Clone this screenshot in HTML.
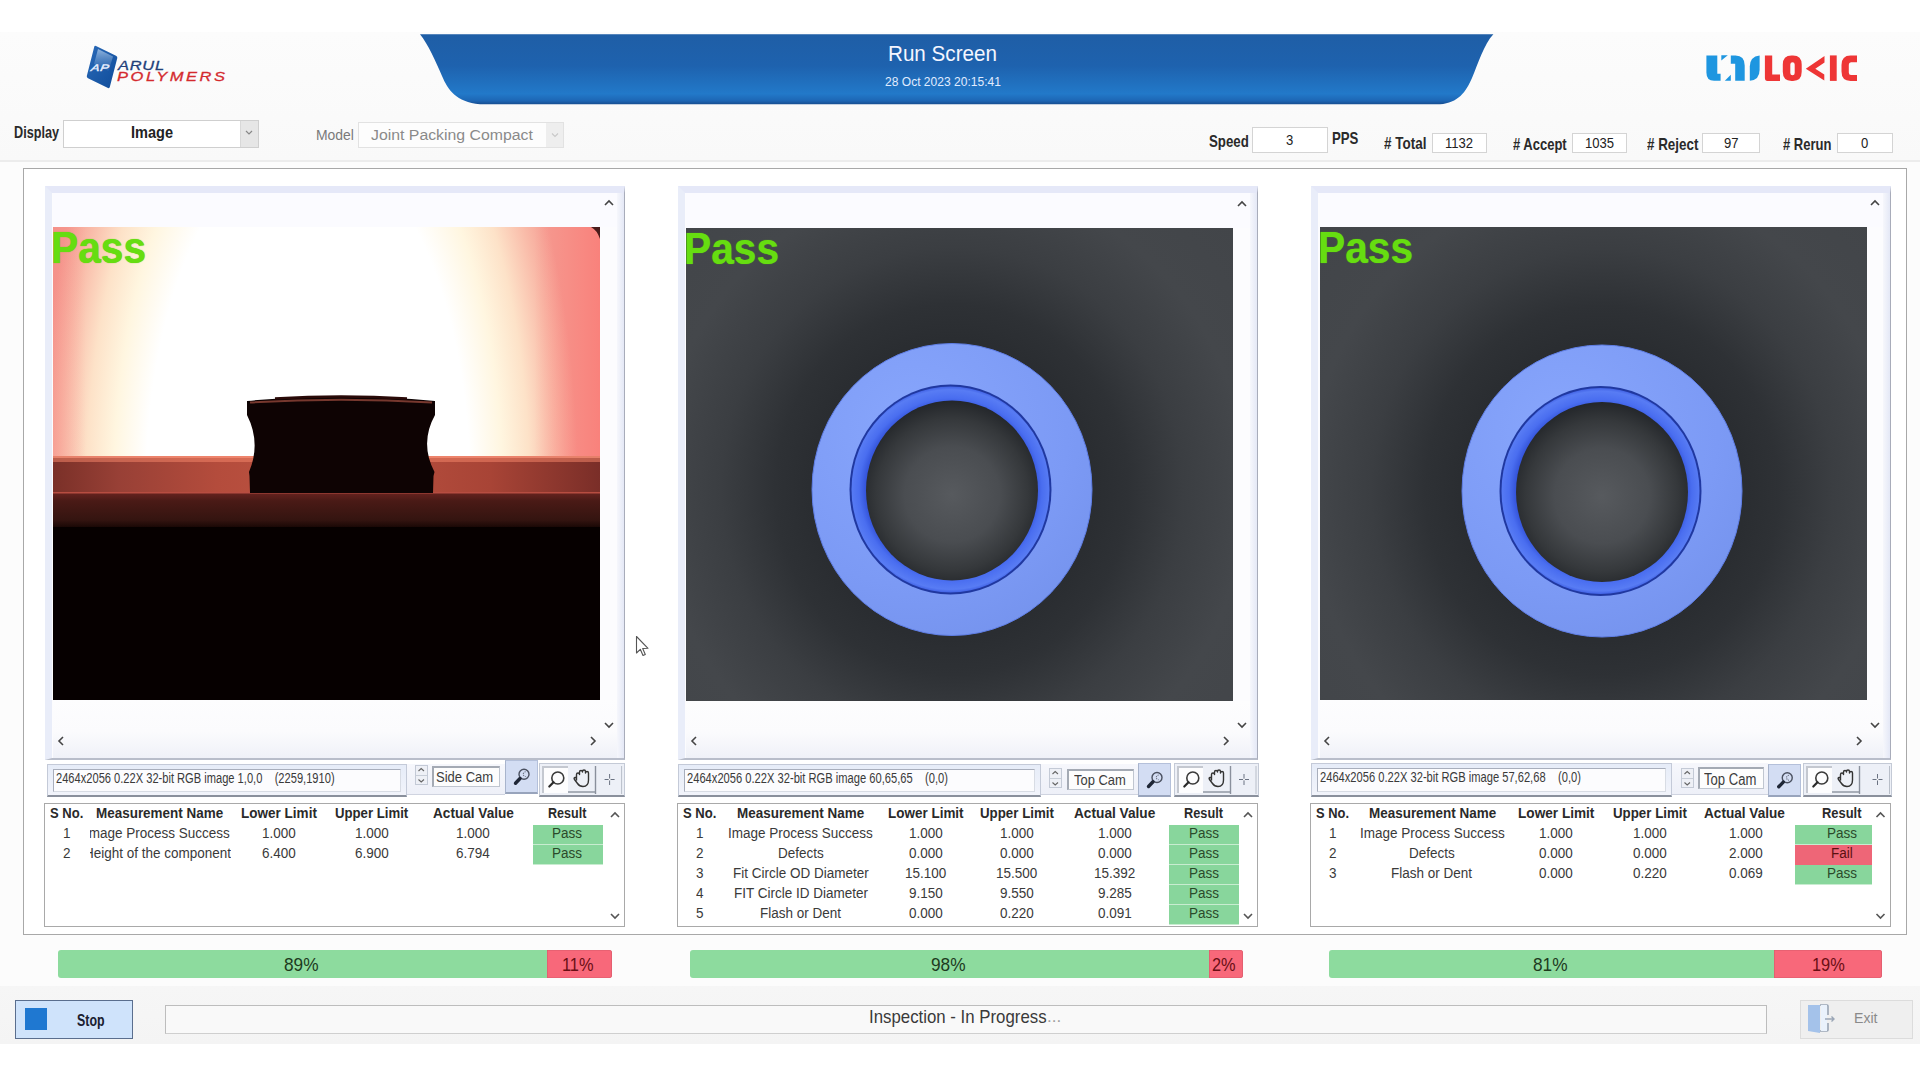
<!DOCTYPE html>
<html><head><meta charset="utf-8"><style>
*{margin:0;padding:0;box-sizing:border-box}
html,body{width:1920px;height:1080px;overflow:hidden;background:#fff}
body{position:relative;font-family:"Liberation Sans", sans-serif}
.t{position:absolute;white-space:nowrap}
.b{position:absolute}
svg{position:absolute;overflow:visible}
</style></head><body>
<div class="b" style="left:0px;top:0px;width:1920px;height:32px;background:#ffffff"></div>
<div class="b" style="left:0px;top:32px;width:1920px;height:129px;background:linear-gradient(#fcfcfc,#f9f9f9)"></div>
<div class="b" style="left:0px;top:160px;width:1920px;height:2px;background:#ececec"></div>
<div class="b" style="left:0px;top:162px;width:1920px;height:824px;background:#fcfcfc"></div>
<div class="b" style="left:0px;top:986px;width:1920px;height:58px;background:linear-gradient(#f6f6f6,#f4f4f4)"></div>
<div class="b" style="left:0px;top:1044px;width:1920px;height:36px;background:#ffffff"></div>
<svg style="left:0;top:0" width="1920" height="120">
<defs><linearGradient id="bg1" x1="0" y1="0" x2="0" y2="1">
<stop offset="0" stop-color="#1f5ea6"/><stop offset="0.45" stop-color="#1e62ae"/><stop offset="0.85" stop-color="#2279c9"/><stop offset="0.95" stop-color="#1d66b4"/><stop offset="1" stop-color="#174d90"/></linearGradient></defs>
<path d="M420 34.3 L1493.4 34.3 C1484 44 1478 64 1472 78 C1466 92 1458 103 1440 104.3 L480 104.3 C456 102 448 90 442 76 C436 62 428 44 420 34.3 Z" fill="url(#bg1)"/>
</svg>
<div class="t" style="left:888.0px;top:42.6px;font-size:22.53px;line-height:22.53px;color:#f4f6ff;transform:scaleX(0.916);transform-origin:0 0;">Run Screen</div>
<div class="t" style="left:884.5px;top:75.1px;font-size:13.52px;line-height:13.52px;color:#e0ecff;transform:scaleX(0.892);transform-origin:0 0;">28 Oct 2023 20:15:41</div>
<div class="t" style="left:14.0px;top:124.5px;font-size:15.99px;line-height:15.99px;color:#2a2a2a;font-weight:bold;transform:scaleX(0.792);transform-origin:0 0;">Display</div>
<div class="b" style="left:63px;top:120px;width:196px;height:28px;background:#fff;border:1px solid #cfcfcf"></div>
<div class="b" style="left:240px;top:121px;width:18px;height:26px;background:#e6e6e6;border-left:1px solid #d8d8d8"></div>
<div class="t" style="left:131.0px;top:124.5px;font-size:15.99px;line-height:15.99px;color:#222;font-weight:bold;transform:scaleX(0.909);transform-origin:0 0;">Image</div>
<svg style="left:244px;top:128px" width="10" height="10"><path d="M2 3 L5 6 L8 3" stroke="#888" stroke-width="1.2" fill="none"/></svg>
<div class="t" style="left:316.0px;top:127.7px;font-size:14.53px;line-height:14.53px;color:#7a7a7a;transform:scaleX(0.959);transform-origin:0 0;">Model</div>
<div class="b" style="left:358px;top:122px;width:206px;height:26px;background:#fdfdfd;border:1px solid #e2e2e2"></div>
<div class="b" style="left:546px;top:123px;width:17px;height:24px;background:#eeeeee"></div>
<svg style="left:550px;top:130px" width="10" height="10"><path d="M2 3.5 L5 6.5 L8 3.5" stroke="#c8c8c8" stroke-width="1.1" fill="none"/></svg>
<div class="t" style="left:371.0px;top:127.1px;font-size:15.26px;line-height:15.26px;color:#8a8a8a;transform:scaleX(1.038);transform-origin:0 0;">Joint Packing Compact</div>
<div class="t" style="left:1208.6px;top:133.5px;font-size:15.99px;line-height:15.99px;color:#2a2a2a;font-weight:bold;transform:scaleX(0.830);transform-origin:0 0;">Speed</div>
<div class="b" style="left:1252px;top:127px;width:76px;height:26px;background:#fff;border:1px solid #d4d4d4"></div>
<div class="t" style="left:1286.4px;top:132.7px;font-size:14.53px;line-height:14.53px;color:#222;transform:scaleX(0.900);transform-origin:0 0;">3</div>
<div class="t" style="left:1331.6px;top:130.7px;font-size:15.99px;line-height:15.99px;color:#2a2a2a;font-weight:bold;transform:scaleX(0.826);transform-origin:0 0;">PPS</div>
<div class="t" style="left:1384.0px;top:136.0px;font-size:15.99px;line-height:15.99px;color:#2a2a2a;font-weight:bold;transform:scaleX(0.842);transform-origin:0 0;"># Total</div>
<div class="b" style="left:1432px;top:133px;width:55px;height:20px;background:#fff;border:1px solid #d4d4d4"></div>
<div class="t" style="left:1445.4px;top:135.7px;font-size:14.53px;line-height:14.53px;color:#222;transform:scaleX(0.900);transform-origin:0 0;">1132</div>
<div class="t" style="left:1513.0px;top:136.5px;font-size:15.99px;line-height:15.99px;color:#2a2a2a;font-weight:bold;transform:scaleX(0.813);transform-origin:0 0;"># Accept</div>
<div class="b" style="left:1572px;top:133px;width:55px;height:20px;background:#fff;border:1px solid #d4d4d4"></div>
<div class="t" style="left:1584.9px;top:135.7px;font-size:14.53px;line-height:14.53px;color:#222;transform:scaleX(0.900);transform-origin:0 0;">1035</div>
<div class="t" style="left:1646.6px;top:136.5px;font-size:15.99px;line-height:15.99px;color:#2a2a2a;font-weight:bold;transform:scaleX(0.838);transform-origin:0 0;"># Reject</div>
<div class="b" style="left:1702px;top:133px;width:58px;height:20px;background:#fff;border:1px solid #d4d4d4"></div>
<div class="t" style="left:1723.7px;top:135.7px;font-size:14.53px;line-height:14.53px;color:#222;transform:scaleX(0.900);transform-origin:0 0;">97</div>
<div class="t" style="left:1783.0px;top:136.5px;font-size:15.99px;line-height:15.99px;color:#2a2a2a;font-weight:bold;transform:scaleX(0.814);transform-origin:0 0;"># Rerun</div>
<div class="b" style="left:1837px;top:133px;width:56px;height:20px;background:#fff;border:1px solid #d4d4d4"></div>
<div class="t" style="left:1861.4px;top:135.7px;font-size:14.53px;line-height:14.53px;color:#222;transform:scaleX(0.900);transform-origin:0 0;">0</div>
<div class="b" style="left:23px;top:168px;width:1884px;height:767px;background:#ffffff;border:1.5px solid #a8a8a8"></div>
<div class="b" style="left:45px;top:186px;width:580px;height:574px;background:#fcfcfe;border-top:7px solid #e5e8f8;border-left:7px solid #e9edf9;border-right:1.5px solid #a8acba;border-bottom:2px solid #b8bdca"></div>
<div class="b" style="left:53px;top:193px;width:564px;height:34px;background:#fbfbff"></div>
<svg style="left:53px;top:227px" width="547" height="473" viewBox="0 0 547 473">
<defs>
<radialGradient id="glow" cx="255" cy="262" r="270" gradientUnits="userSpaceOnUse" gradientTransform="translate(255 262) scale(1 2.15) translate(-255 -262)">
<stop offset="0" stop-color="#ffffff"/><stop offset="0.6" stop-color="#ffffff"/><stop offset="0.72" stop-color="#fff6e0"/><stop offset="0.82" stop-color="#fde2c8"/><stop offset="0.92" stop-color="#f9baa8"/><stop offset="1" stop-color="#f59c92"/></radialGradient>
<linearGradient id="skyr" x1="0" y1="0" x2="1" y2="0"><stop offset="0" stop-color="#f47070" stop-opacity="0.25"/><stop offset="0.06" stop-color="#f47070" stop-opacity="0"/><stop offset="0.88" stop-color="#ff5a5a" stop-opacity="0"/><stop offset="1" stop-color="#ff5a5a" stop-opacity="0.4"/></linearGradient>
<linearGradient id="band1" x1="0" y1="0" x2="1" y2="0"><stop offset="0" stop-color="#7a3028"/><stop offset="0.12" stop-color="#984036"/><stop offset="0.3" stop-color="#b44c3c"/><stop offset="0.5" stop-color="#be5442"/><stop offset="0.8" stop-color="#a84436"/><stop offset="1" stop-color="#7a2e28"/></linearGradient>
<linearGradient id="band2" x1="0" y1="0" x2="0" y2="1">
<stop offset="0" stop-color="#6a2420"/><stop offset="0.25" stop-color="#4a1a16"/><stop offset="0.8" stop-color="#341410"/><stop offset="1" stop-color="#1a0806"/></linearGradient>
</defs>
<rect x="0" y="0" width="547" height="229" fill="#f59c92"/>
<rect x="0" y="0" width="547" height="229" fill="url(#glow)"/>
<rect x="0" y="0" width="547" height="229" fill="url(#skyr)"/>
<rect x="0" y="229" width="547" height="36" fill="url(#band1)"/>
<rect x="0" y="229" width="547" height="6" fill="#f08468" opacity="0.55"/>
<rect x="0" y="229" width="547" height="2" fill="#f89078" opacity="0.7"/>
<rect x="0" y="265" width="547" height="35" fill="url(#band2)"/>
<rect x="0" y="265" width="547" height="1.5" fill="#d86050" opacity="0.7"/>
<rect x="0" y="300" width="547" height="173" fill="#060000"/>
<path transform="translate(-53 -227)" d="M247 401 Q341 392 435 401 L435 415 Q419.4 443 434.5 472 L433.5 476 L433 493 L250 493 L249.5 476 L249 472 Q261.2 443 247 415 Z" fill="#0e0303"/>
<path transform="translate(-53 -227)" d="M250 402.5 Q341 397 432 402.5" stroke="#8a4236" stroke-width="2" fill="none" opacity="0.85"/>
<path transform="translate(-53 -227)" d="M275 398.5 Q341 394.5 407 398.5" stroke="#2a0a08" stroke-width="2.5" fill="none"/>
<path d="M538 0 L547 0 L547 12 Q544 3 538 0 Z" fill="#2a0a0a" opacity="0.85"/>
</svg>
<div class="b" style="left:53px;top:700px;width:564px;height:58px;background:linear-gradient(#fdfdfe,#fbfbfd 55%,#eff1f8)"></div>
<div class="b" style="left:617px;top:193px;width:6.5px;height:565px;background:linear-gradient(to right,#f6f7fc,#e4e8f6)"></div>
<div class="b" style="left:53px;top:227px;width:200px;height:60px;overflow:hidden"><div class="t" style="left:-2.5px;top:-1.0px;font-size:44.33px;line-height:44.33px;color:#66dd11;font-weight:bold;transform:scaleX(0.918);transform-origin:0 0;text-shadow:0 0 1px #5c0">Pass</div>
</div>
<svg style="left:0;top:0" width="1" height="1"><path d="M605 205 L609 201 L613 205" stroke="#444" stroke-width="1.6" fill="none"/></svg>
<svg style="left:0;top:0" width="1" height="1"><path d="M605 723 L609 727 L613 723" stroke="#444" stroke-width="1.6" fill="none"/></svg>
<svg style="left:0;top:0" width="1" height="1"><path d="M63 737 L59 741 L63 745" stroke="#444" stroke-width="1.6" fill="none"/></svg>
<svg style="left:0;top:0" width="1" height="1"><path d="M591 737 L595 741 L591 745" stroke="#444" stroke-width="1.6" fill="none"/></svg>
<div class="b" style="left:47px;top:763.5px;width:360px;height:33.5px;background:linear-gradient(#e6ecf8,#f2f4fb);border:1px solid #c4cad8;border-bottom:2px solid #8a909c"></div>
<div class="b" style="left:53px;top:768.5px;width:348px;height:23.5px;background:#fcfcfe;border:1px solid #a8aebc;border-right-color:#d8dce4;border-bottom-color:#d8dce4"></div>
<div class="t" style="left:56.0px;top:770.7px;font-size:14.39px;line-height:14.39px;color:#3a3a3a;transform:scaleX(0.773);transform-origin:0 0;">2464x2056 0.22X 32-bit RGB image 1,0,0&nbsp;&nbsp;&nbsp;&nbsp;(2259,1910)</div>
<div class="b" style="left:407px;top:763.5px;width:98px;height:31.5px;background:linear-gradient(#f6f7fc,#eef0f8);border-bottom:1px solid #d0d4e0"></div>
<div class="b" style="left:415px;top:765px;width:12.5px;height:20px;background:#eef0f6;border:1px solid #c4cad6"></div>
<div class="b" style="left:416px;top:775.0px;width:10.5px;height:1.0px;background:#c8ced8"></div>
<svg style="left:415px;top:765px" width="1" height="1"><path d="M3.5 6.0 L6.2 3.5 L9 6.0" stroke="#666" stroke-width="1.1" fill="none"/><path d="M3.5 14.5 L6.2 17.0 L9 14.5" stroke="#666" stroke-width="1.1" fill="none"/></svg>
<div class="b" style="left:432px;top:765.6px;width:68px;height:21.399999999999977px;background:#fdfdfd;border:1px solid #c0c6d0;border-top:2px solid #a4aab4;border-left:2px solid #a4aab4"></div>
<div class="t" style="left:436.3px;top:768.9px;font-size:15.41px;line-height:15.41px;color:#3c3c3c;transform:scaleX(0.846);transform-origin:0 0;">Side Cam</div>
<div class="b" style="left:505px;top:760px;width:33px;height:33.5px;background:#d3ddf3;border:1px solid #b4c0da;border-bottom:2px solid #98a4bc;border-left:1.5px solid #a8b4cc"></div>
<svg style="left:505px;top:760px" width="1" height="1"><circle cx="19.0" cy="14.25" r="5" stroke="#4a5060" stroke-width="1.4" fill="none"/><path d="M15.3 17.95" stroke="none"/><path d="M15.0 18.55 L10.5 23.25" stroke="#1e2636" stroke-width="3.4" stroke-linecap="round"/><path d="M20.7 11.75 A2.3 2.3 0 1 0 20.7 16.55" stroke="#6a7080" stroke-width="1.1" fill="none" stroke-dasharray="1.2 0.8"/></svg>
<div class="b" style="left:539.4px;top:762.5px;width:85.60000000000002px;height:34.0px;background:#edf0f7;border:1px solid #c4cad6;border-bottom:2px solid #8a909c"></div>
<div class="b" style="left:542.4px;top:765.5px;width:26.0px;height:27.0px;background:#fdfdfe;border-top:2px solid #c4c8d0;border-left:2px solid #c4c8d0"></div>
<div class="b" style="left:568.4px;top:790.5px;width:27.0px;height:2.0px;background:#a8aeb8"></div>
<svg style="left:539.4px;top:762.5px" width="1" height="1"><circle cx="18.8" cy="15" r="6" stroke="#3a3a3a" stroke-width="1.6" fill="none"/><path d="M14.5 19.3 L10.3 23.5" stroke="#2a2a2a" stroke-width="2.2" stroke-linecap="round"/><path d="M37.5 17.5 L37.5 11.5 Q37.5 10 39 10 Q40.5 10 40.5 11.5 L40.5 9 Q40.5 7.5 42 7.5 Q43.5 7.5 43.5 9 L43.5 8.5 Q43.5 7 45 7 Q46.5 7 46.5 8.5 L46.5 10 Q46.5 8.5 48 8.5 Q49.5 8.5 49.5 10 L49.5 17 Q49.5 23.5 44 23.5 Q40.5 23.5 38.5 20.5 L35.5 16.5 Q34.5 15 36 14.5 Q37 14.3 37.5 15.5" stroke="#333" stroke-width="1.4" fill="none" stroke-linejoin="round"/><path d="M56.5 3 L56.5 31" stroke="#8a909c" stroke-width="1.4"/><path d="M70.60000000000002 11 L70.60000000000002 22 M65.60000000000002 16.5 L75.60000000000002 16.5" stroke="#6a7282" stroke-width="1"/><circle cx="70.60000000000002" cy="16.5" r="1" fill="#fff"/><path d="M82.60000000000002 3 L82.60000000000002 31" stroke="#b8bec8" stroke-width="1"/></svg>
<div class="b" style="left:678px;top:186px;width:580px;height:574px;background:#fcfcfe;border-top:7px solid #e5e8f8;border-left:7px solid #e9edf9;border-right:1.5px solid #a8acba;border-bottom:2px solid #b8bdca"></div>
<div class="b" style="left:686px;top:193px;width:564px;height:35px;background:#fbfbff"></div>
<svg style="left:686px;top:228px" width="547" height="473" viewBox="0 0 547 473">
<defs>
<radialGradient id="bgr2" cx="266" cy="261.5" r="420" gradientUnits="userSpaceOnUse" gradientTransform="translate(266 261.5) scale(1 1.05) translate(-266 -261.5)">
<stop offset="0" stop-color="#2a2d31"/><stop offset="0.34" stop-color="#2a2d31"/><stop offset="0.42" stop-color="#2e3135"/><stop offset="0.55" stop-color="#3b3e42"/><stop offset="0.7" stop-color="#44474b"/><stop offset="1" stop-color="#414448"/></radialGradient>
<radialGradient id="hole2" cx="266" cy="266.5" r="95" gradientUnits="userSpaceOnUse">
<stop offset="0" stop-color="#575a5e"/><stop offset="0.5" stop-color="#4a4d51"/><stop offset="0.8" stop-color="#35383b"/><stop offset="1" stop-color="#222529"/></radialGradient>
<radialGradient id="rband2" cx="264.5" cy="261.5" r="104" gradientUnits="userSpaceOnUse">
<stop offset="0.8" stop-color="#2f4ed6"/><stop offset="0.88" stop-color="#4a6ef0"/><stop offset="0.96" stop-color="#587cf4"/><stop offset="1" stop-color="#3a5ae0"/></radialGradient>
<radialGradient id="ring2" cx="226" cy="201.5" r="260" gradientUnits="userSpaceOnUse">
<stop offset="0" stop-color="#88a6fc"/><stop offset="0.6" stop-color="#7c9af5"/><stop offset="1" stop-color="#7290ea"/></radialGradient>
</defs>
<rect x="0" y="0" width="547" height="473" fill="url(#bgr2)"/>
<ellipse cx="266" cy="261.5" rx="140" ry="146" fill="url(#ring2)" stroke="#5f7ee6" stroke-width="1"/>
<ellipse cx="264.5" cy="261.5" rx="101" ry="105" fill="#2038a0"/>
<ellipse cx="264.5" cy="261.5" rx="99" ry="103" fill="url(#rband2)"/>
<ellipse cx="266" cy="262.5" rx="86" ry="90" fill="url(#hole2)"/>
</svg>
<div class="b" style="left:686px;top:701px;width:564px;height:57px;background:linear-gradient(#fdfdfe,#fbfbfd 55%,#eff1f8)"></div>
<div class="b" style="left:1250px;top:193px;width:6.5px;height:565px;background:linear-gradient(to right,#f6f7fc,#e4e8f6)"></div>
<div class="b" style="left:686px;top:228px;width:200px;height:60px;overflow:hidden"><div class="t" style="left:-2.5px;top:-1.0px;font-size:44.33px;line-height:44.33px;color:#66dd11;font-weight:bold;transform:scaleX(0.918);transform-origin:0 0;text-shadow:0 0 1px #5c0">Pass</div>
</div>
<svg style="left:0;top:0" width="1" height="1"><path d="M1238 206 L1242 202 L1246 206" stroke="#444" stroke-width="1.6" fill="none"/></svg>
<svg style="left:0;top:0" width="1" height="1"><path d="M1238 723 L1242 727 L1246 723" stroke="#444" stroke-width="1.6" fill="none"/></svg>
<svg style="left:0;top:0" width="1" height="1"><path d="M696 737 L692 741 L696 745" stroke="#444" stroke-width="1.6" fill="none"/></svg>
<svg style="left:0;top:0" width="1" height="1"><path d="M1224 737 L1228 741 L1224 745" stroke="#444" stroke-width="1.6" fill="none"/></svg>
<div class="b" style="left:678px;top:763.7px;width:363px;height:33.299999999999955px;background:linear-gradient(#e6ecf8,#f2f4fb);border:1px solid #c4cad8;border-bottom:2px solid #8a909c"></div>
<div class="b" style="left:684px;top:768.7px;width:351px;height:23.299999999999955px;background:#fcfcfe;border:1px solid #a8aebc;border-right-color:#d8dce4;border-bottom-color:#d8dce4"></div>
<div class="t" style="left:686.8px;top:770.9px;font-size:14.83px;line-height:14.83px;color:#3a3a3a;transform:scaleX(0.752);transform-origin:0 0;">2464x2056 0.22X 32-bit RGB image 60,65,65&nbsp;&nbsp;&nbsp;&nbsp;(0,0)</div>
<div class="b" style="left:1041px;top:763.7px;width:97px;height:31.299999999999955px;background:linear-gradient(#f6f7fc,#eef0f8);border-bottom:1px solid #d0d4e0"></div>
<div class="b" style="left:1049.4px;top:768px;width:12.599999999999909px;height:20px;background:#eef0f6;border:1px solid #c4cad6"></div>
<div class="b" style="left:1050.4px;top:778.0px;width:10.599999999999909px;height:1.0px;background:#c8ced8"></div>
<svg style="left:1049.4px;top:768px" width="1" height="1"><path d="M3.5 6.0 L6.2 3.5 L9 6.0" stroke="#666" stroke-width="1.1" fill="none"/><path d="M3.5 14.5 L6.2 17.0 L9 14.5" stroke="#666" stroke-width="1.1" fill="none"/></svg>
<div class="b" style="left:1067px;top:768.5px;width:66.75px;height:21.5px;background:#fdfdfd;border:1px solid #c0c6d0;border-top:2px solid #a4aab4;border-left:2px solid #a4aab4"></div>
<div class="t" style="left:1073.8px;top:772.0px;font-size:15.41px;line-height:15.41px;color:#3c3c3c;transform:scaleX(0.841);transform-origin:0 0;">Top Cam</div>
<div class="b" style="left:1138px;top:763px;width:33px;height:34px;background:#d3ddf3;border:1px solid #b4c0da;border-bottom:2px solid #98a4bc;border-left:1.5px solid #a8b4cc"></div>
<svg style="left:1138px;top:763px" width="1" height="1"><circle cx="19.0" cy="14.5" r="5" stroke="#4a5060" stroke-width="1.4" fill="none"/><path d="M15.3 18.2" stroke="none"/><path d="M15.0 18.8 L10.5 23.5" stroke="#1e2636" stroke-width="3.4" stroke-linecap="round"/><path d="M20.7 12.0 A2.3 2.3 0 1 0 20.7 16.8" stroke="#6a7080" stroke-width="1.1" fill="none" stroke-dasharray="1.2 0.8"/></svg>
<div class="b" style="left:1173.75px;top:763px;width:85.0px;height:33.5px;background:#edf0f7;border:1px solid #c4cad6;border-bottom:2px solid #8a909c"></div>
<div class="b" style="left:1176.75px;top:766px;width:26.0px;height:26.5px;background:#fdfdfe;border-top:2px solid #c4c8d0;border-left:2px solid #c4c8d0"></div>
<div class="b" style="left:1202.75px;top:790.5px;width:27.0px;height:2.0px;background:#a8aeb8"></div>
<svg style="left:1173.75px;top:763px" width="1" height="1"><circle cx="18.8" cy="15" r="6" stroke="#3a3a3a" stroke-width="1.6" fill="none"/><path d="M14.5 19.3 L10.3 23.5" stroke="#2a2a2a" stroke-width="2.2" stroke-linecap="round"/><path d="M37.5 17.5 L37.5 11.5 Q37.5 10 39 10 Q40.5 10 40.5 11.5 L40.5 9 Q40.5 7.5 42 7.5 Q43.5 7.5 43.5 9 L43.5 8.5 Q43.5 7 45 7 Q46.5 7 46.5 8.5 L46.5 10 Q46.5 8.5 48 8.5 Q49.5 8.5 49.5 10 L49.5 17 Q49.5 23.5 44 23.5 Q40.5 23.5 38.5 20.5 L35.5 16.5 Q34.5 15 36 14.5 Q37 14.3 37.5 15.5" stroke="#333" stroke-width="1.4" fill="none" stroke-linejoin="round"/><path d="M56.5 3 L56.5 31" stroke="#8a909c" stroke-width="1.4"/><path d="M70.0 11 L70.0 22 M65.0 16.5 L75.0 16.5" stroke="#6a7282" stroke-width="1"/><circle cx="70.0" cy="16.5" r="1" fill="#fff"/><path d="M82.0 3 L82.0 31" stroke="#b8bec8" stroke-width="1"/></svg>
<div class="b" style="left:1311px;top:186px;width:580px;height:574px;background:#fcfcfe;border-top:7px solid #e5e8f8;border-left:7px solid #e9edf9;border-right:1.5px solid #a8acba;border-bottom:2px solid #b8bdca"></div>
<div class="b" style="left:1320px;top:193px;width:563px;height:34px;background:#fbfbff"></div>
<svg style="left:1320px;top:227px" width="547" height="473" viewBox="0 0 547 473">
<defs>
<radialGradient id="bgr3" cx="282" cy="264" r="420" gradientUnits="userSpaceOnUse" gradientTransform="translate(282 264) scale(1 1.05) translate(-282 -264)">
<stop offset="0" stop-color="#2a2d31"/><stop offset="0.34" stop-color="#2a2d31"/><stop offset="0.42" stop-color="#2e3135"/><stop offset="0.55" stop-color="#3b3e42"/><stop offset="0.7" stop-color="#44474b"/><stop offset="1" stop-color="#414448"/></radialGradient>
<radialGradient id="hole3" cx="282" cy="269" r="95" gradientUnits="userSpaceOnUse">
<stop offset="0" stop-color="#575a5e"/><stop offset="0.5" stop-color="#4a4d51"/><stop offset="0.8" stop-color="#35383b"/><stop offset="1" stop-color="#222529"/></radialGradient>
<radialGradient id="rband3" cx="280.5" cy="264" r="104" gradientUnits="userSpaceOnUse">
<stop offset="0.8" stop-color="#2f4ed6"/><stop offset="0.88" stop-color="#4a6ef0"/><stop offset="0.96" stop-color="#587cf4"/><stop offset="1" stop-color="#3a5ae0"/></radialGradient>
<radialGradient id="ring3" cx="242" cy="204" r="260" gradientUnits="userSpaceOnUse">
<stop offset="0" stop-color="#88a6fc"/><stop offset="0.6" stop-color="#7c9af5"/><stop offset="1" stop-color="#7290ea"/></radialGradient>
</defs>
<rect x="0" y="0" width="547" height="473" fill="url(#bgr3)"/>
<ellipse cx="282" cy="264" rx="140" ry="146" fill="url(#ring3)" stroke="#5f7ee6" stroke-width="1"/>
<ellipse cx="280.5" cy="264" rx="101" ry="105" fill="#2038a0"/>
<ellipse cx="280.5" cy="264" rx="99" ry="103" fill="url(#rband3)"/>
<ellipse cx="282" cy="265" rx="86" ry="90" fill="url(#hole3)"/>
</svg>
<div class="b" style="left:1320px;top:700px;width:563px;height:58px;background:linear-gradient(#fdfdfe,#fbfbfd 55%,#eff1f8)"></div>
<div class="b" style="left:1883px;top:193px;width:6.5px;height:565px;background:linear-gradient(to right,#f6f7fc,#e4e8f6)"></div>
<div class="b" style="left:1320px;top:227px;width:200px;height:60px;overflow:hidden"><div class="t" style="left:-2.5px;top:-1.0px;font-size:44.33px;line-height:44.33px;color:#66dd11;font-weight:bold;transform:scaleX(0.918);transform-origin:0 0;text-shadow:0 0 1px #5c0">Pass</div>
</div>
<svg style="left:0;top:0" width="1" height="1"><path d="M1871 205 L1875 201 L1879 205" stroke="#444" stroke-width="1.6" fill="none"/></svg>
<svg style="left:0;top:0" width="1" height="1"><path d="M1871 723 L1875 727 L1879 723" stroke="#444" stroke-width="1.6" fill="none"/></svg>
<svg style="left:0;top:0" width="1" height="1"><path d="M1329 737 L1325 741 L1329 745" stroke="#444" stroke-width="1.6" fill="none"/></svg>
<svg style="left:0;top:0" width="1" height="1"><path d="M1857 737 L1861 741 L1857 745" stroke="#444" stroke-width="1.6" fill="none"/></svg>
<div class="b" style="left:1311.25px;top:762.8px;width:360.75px;height:33.80000000000007px;background:linear-gradient(#e6ecf8,#f2f4fb);border:1px solid #c4cad8;border-bottom:2px solid #8a909c"></div>
<div class="b" style="left:1317.25px;top:767.8px;width:348.75px;height:23.800000000000068px;background:#fcfcfe;border:1px solid #a8aebc;border-right-color:#d8dce4;border-bottom-color:#d8dce4"></div>
<div class="t" style="left:1320.3px;top:770.0px;font-size:14.10px;line-height:14.10px;color:#3a3a3a;transform:scaleX(0.791);transform-origin:0 0;">2464x2056 0.22X 32-bit RGB image 57,62,68&nbsp;&nbsp;&nbsp;&nbsp;(0,0)</div>
<div class="b" style="left:1672px;top:762.8px;width:95.5px;height:31.800000000000068px;background:linear-gradient(#f6f7fc,#eef0f8);border-bottom:1px solid #d0d4e0"></div>
<div class="b" style="left:1681px;top:767.5px;width:12.75px;height:20.0px;background:#eef0f6;border:1px solid #c4cad6"></div>
<div class="b" style="left:1682px;top:777.5px;width:10.75px;height:1.0px;background:#c8ced8"></div>
<svg style="left:1681px;top:767.5px" width="1" height="1"><path d="M3.5 6.0 L6.2 3.5 L9 6.0" stroke="#666" stroke-width="1.1" fill="none"/><path d="M3.5 14.5 L6.2 17.0 L9 14.5" stroke="#666" stroke-width="1.1" fill="none"/></svg>
<div class="b" style="left:1698px;top:767px;width:66.40000000000009px;height:22.399999999999977px;background:#fdfdfd;border:1px solid #c0c6d0;border-top:2px solid #a4aab4;border-left:2px solid #a4aab4"></div>
<div class="t" style="left:1704.4px;top:770.5px;font-size:16.42px;line-height:16.42px;color:#3c3c3c;transform:scaleX(0.799);transform-origin:0 0;">Top Cam</div>
<div class="b" style="left:1767.5px;top:764.4px;width:33.5px;height:32.60000000000002px;background:#d3ddf3;border:1px solid #b4c0da;border-bottom:2px solid #98a4bc;border-left:1.5px solid #a8b4cc"></div>
<svg style="left:1767.5px;top:764.4px" width="1" height="1"><circle cx="19.25" cy="13.800000000000011" r="5" stroke="#4a5060" stroke-width="1.4" fill="none"/><path d="M15.55 17.50000000000001" stroke="none"/><path d="M15.25 18.100000000000012 L10.75 22.80000000000001" stroke="#1e2636" stroke-width="3.4" stroke-linecap="round"/><path d="M20.95 11.300000000000011 A2.3 2.3 0 1 0 20.95 16.100000000000012" stroke="#6a7080" stroke-width="1.1" fill="none" stroke-dasharray="1.2 0.8"/></svg>
<div class="b" style="left:1802.5px;top:763px;width:89.5px;height:33.5px;background:#edf0f7;border:1px solid #c4cad6;border-bottom:2px solid #8a909c"></div>
<div class="b" style="left:1805.5px;top:766px;width:26.0px;height:26.5px;background:#fdfdfe;border-top:2px solid #c4c8d0;border-left:2px solid #c4c8d0"></div>
<div class="b" style="left:1831.5px;top:790.5px;width:27.0px;height:2.0px;background:#a8aeb8"></div>
<svg style="left:1802.5px;top:763px" width="1" height="1"><circle cx="18.8" cy="15" r="6" stroke="#3a3a3a" stroke-width="1.6" fill="none"/><path d="M14.5 19.3 L10.3 23.5" stroke="#2a2a2a" stroke-width="2.2" stroke-linecap="round"/><path d="M37.5 17.5 L37.5 11.5 Q37.5 10 39 10 Q40.5 10 40.5 11.5 L40.5 9 Q40.5 7.5 42 7.5 Q43.5 7.5 43.5 9 L43.5 8.5 Q43.5 7 45 7 Q46.5 7 46.5 8.5 L46.5 10 Q46.5 8.5 48 8.5 Q49.5 8.5 49.5 10 L49.5 17 Q49.5 23.5 44 23.5 Q40.5 23.5 38.5 20.5 L35.5 16.5 Q34.5 15 36 14.5 Q37 14.3 37.5 15.5" stroke="#333" stroke-width="1.4" fill="none" stroke-linejoin="round"/><path d="M56.5 3 L56.5 31" stroke="#8a909c" stroke-width="1.4"/><path d="M74.5 11 L74.5 22 M69.5 16.5 L79.5 16.5" stroke="#6a7282" stroke-width="1"/><circle cx="74.5" cy="16.5" r="1" fill="#fff"/><path d="M86.5 3 L86.5 31" stroke="#b8bec8" stroke-width="1"/></svg>
<div class="b" style="left:44px;top:803px;width:581px;height:124px;background:#fff;border:1px solid #a9a9a9"></div>
<div class="t" style="left:50.0px;top:806.2px;font-size:14.53px;line-height:14.53px;color:#2a2a2a;font-weight:bold;transform:scaleX(0.897);transform-origin:0 0;">S No.</div>
<div class="t" style="left:96.0px;top:806.2px;font-size:14.53px;line-height:14.53px;color:#2a2a2a;font-weight:bold;transform:scaleX(0.927);transform-origin:0 0;">Measurement Name</div>
<div class="t" style="left:240.7px;top:806.2px;font-size:14.53px;line-height:14.53px;color:#2a2a2a;font-weight:bold;transform:scaleX(0.932);transform-origin:0 0;">Lower Limit</div>
<div class="t" style="left:335.0px;top:806.2px;font-size:14.53px;line-height:14.53px;color:#2a2a2a;font-weight:bold;transform:scaleX(0.908);transform-origin:0 0;">Upper Limit</div>
<div class="t" style="left:433.3px;top:806.2px;font-size:14.53px;line-height:14.53px;color:#2a2a2a;font-weight:bold;transform:scaleX(0.937);transform-origin:0 0;">Actual Value</div>
<div class="t" style="left:548.3px;top:806.2px;font-size:14.53px;line-height:14.53px;color:#2a2a2a;font-weight:bold;transform:scaleX(0.865);transform-origin:0 0;">Result</div>
<svg style="left:0;top:0" width="1" height="1"><path d="M611 817 L615 813 L619 817" stroke="#555" stroke-width="1.6" fill="none"/></svg>
<svg style="left:0;top:0" width="1" height="1"><path d="M611 914 L615 918 L619 914" stroke="#555" stroke-width="1.6" fill="none"/></svg>
<div class="b" style="left:532.7px;top:825px;width:70.59999999999991px;height:20px;background:#88d69c;border-bottom:1px solid #c8ecd0"></div>
<div class="t" style="left:62.9px;top:826.2px;font-size:14.53px;line-height:14.53px;color:#3a3a3a;transform:scaleX(0.930);transform-origin:0 0;">1</div>
<div class="b" style="left:90px;top:822.5px;width:141px;height:22px;overflow:hidden"><div class="t" style="left:-5.0px;top:3.7px;font-size:14.53px;line-height:14.53px;color:#3a3a3a;transform:scaleX(0.930);transform-origin:0 0;">Image Process Success</div>
</div>
<div class="t" style="left:262.4px;top:826.2px;font-size:14.53px;line-height:14.53px;color:#3a3a3a;transform:scaleX(0.930);transform-origin:0 0;">1.000</div>
<div class="t" style="left:354.8px;top:826.2px;font-size:14.53px;line-height:14.53px;color:#3a3a3a;transform:scaleX(0.930);transform-origin:0 0;">1.000</div>
<div class="t" style="left:456.4px;top:826.2px;font-size:14.53px;line-height:14.53px;color:#3a3a3a;transform:scaleX(0.930);transform-origin:0 0;">1.000</div>
<div class="t" style="left:551.7px;top:826.2px;font-size:14.53px;line-height:14.53px;color:#2b4a2b;transform:scaleX(0.930);transform-origin:0 0;">Pass</div>
<div class="b" style="left:532.7px;top:845px;width:70.59999999999991px;height:20px;background:#88d69c;border-bottom:1px solid #c8ecd0"></div>
<div class="t" style="left:62.9px;top:846.2px;font-size:14.53px;line-height:14.53px;color:#3a3a3a;transform:scaleX(0.930);transform-origin:0 0;">2</div>
<div class="b" style="left:90px;top:842.5px;width:141px;height:22px;overflow:hidden"><div class="t" style="left:-6.1px;top:3.7px;font-size:14.53px;line-height:14.53px;color:#3a3a3a;transform:scaleX(0.930);transform-origin:0 0;">Height of the component</div>
</div>
<div class="t" style="left:262.4px;top:846.2px;font-size:14.53px;line-height:14.53px;color:#3a3a3a;transform:scaleX(0.930);transform-origin:0 0;">6.400</div>
<div class="t" style="left:354.8px;top:846.2px;font-size:14.53px;line-height:14.53px;color:#3a3a3a;transform:scaleX(0.930);transform-origin:0 0;">6.900</div>
<div class="t" style="left:456.4px;top:846.2px;font-size:14.53px;line-height:14.53px;color:#3a3a3a;transform:scaleX(0.930);transform-origin:0 0;">6.794</div>
<div class="t" style="left:551.7px;top:846.2px;font-size:14.53px;line-height:14.53px;color:#2b4a2b;transform:scaleX(0.930);transform-origin:0 0;">Pass</div>
<div class="b" style="left:677px;top:803px;width:581px;height:124px;background:#fff;border:1px solid #a9a9a9"></div>
<div class="t" style="left:683.3px;top:806.2px;font-size:14.53px;line-height:14.53px;color:#2a2a2a;font-weight:bold;transform:scaleX(0.899);transform-origin:0 0;">S No.</div>
<div class="t" style="left:736.7px;top:806.2px;font-size:14.53px;line-height:14.53px;color:#2a2a2a;font-weight:bold;transform:scaleX(0.927);transform-origin:0 0;">Measurement Name</div>
<div class="t" style="left:888.3px;top:806.2px;font-size:14.53px;line-height:14.53px;color:#2a2a2a;font-weight:bold;transform:scaleX(0.928);transform-origin:0 0;">Lower Limit</div>
<div class="t" style="left:980.0px;top:806.2px;font-size:14.53px;line-height:14.53px;color:#2a2a2a;font-weight:bold;transform:scaleX(0.917);transform-origin:0 0;">Upper Limit</div>
<div class="t" style="left:1074.3px;top:806.2px;font-size:14.53px;line-height:14.53px;color:#2a2a2a;font-weight:bold;transform:scaleX(0.942);transform-origin:0 0;">Actual Value</div>
<div class="t" style="left:1184.3px;top:806.2px;font-size:14.53px;line-height:14.53px;color:#2a2a2a;font-weight:bold;transform:scaleX(0.878);transform-origin:0 0;">Result</div>
<svg style="left:0;top:0" width="1" height="1"><path d="M1244 817 L1248 813 L1252 817" stroke="#555" stroke-width="1.6" fill="none"/></svg>
<svg style="left:0;top:0" width="1" height="1"><path d="M1244 914 L1248 918 L1252 914" stroke="#555" stroke-width="1.6" fill="none"/></svg>
<div class="b" style="left:1169.3px;top:825px;width:70.0px;height:20px;background:#88d69c;border-bottom:1px solid #c8ecd0"></div>
<div class="t" style="left:695.5px;top:826.2px;font-size:14.53px;line-height:14.53px;color:#3a3a3a;transform:scaleX(0.930);transform-origin:0 0;">1</div>
<div class="b" style="left:720px;top:822.5px;width:160px;height:22px;overflow:hidden"><div class="t" style="left:8.2px;top:3.7px;font-size:14.53px;line-height:14.53px;color:#3a3a3a;transform:scaleX(0.930);transform-origin:0 0;">Image Process Success</div>
</div>
<div class="t" style="left:909.1px;top:826.2px;font-size:14.53px;line-height:14.53px;color:#3a3a3a;transform:scaleX(0.930);transform-origin:0 0;">1.000</div>
<div class="t" style="left:999.8px;top:826.2px;font-size:14.53px;line-height:14.53px;color:#3a3a3a;transform:scaleX(0.930);transform-origin:0 0;">1.000</div>
<div class="t" style="left:1098.1px;top:826.2px;font-size:14.53px;line-height:14.53px;color:#3a3a3a;transform:scaleX(0.930);transform-origin:0 0;">1.000</div>
<div class="t" style="left:1189.0px;top:826.2px;font-size:14.53px;line-height:14.53px;color:#2b4a2b;transform:scaleX(0.930);transform-origin:0 0;">Pass</div>
<div class="b" style="left:1169.3px;top:845px;width:70.0px;height:20px;background:#88d69c;border-bottom:1px solid #c8ecd0"></div>
<div class="t" style="left:695.5px;top:846.2px;font-size:14.53px;line-height:14.53px;color:#3a3a3a;transform:scaleX(0.930);transform-origin:0 0;">2</div>
<div class="b" style="left:720px;top:842.5px;width:160px;height:22px;overflow:hidden"><div class="t" style="left:57.8px;top:3.7px;font-size:14.53px;line-height:14.53px;color:#3a3a3a;transform:scaleX(0.930);transform-origin:0 0;">Defects</div>
</div>
<div class="t" style="left:909.1px;top:846.2px;font-size:14.53px;line-height:14.53px;color:#3a3a3a;transform:scaleX(0.930);transform-origin:0 0;">0.000</div>
<div class="t" style="left:999.8px;top:846.2px;font-size:14.53px;line-height:14.53px;color:#3a3a3a;transform:scaleX(0.930);transform-origin:0 0;">0.000</div>
<div class="t" style="left:1098.1px;top:846.2px;font-size:14.53px;line-height:14.53px;color:#3a3a3a;transform:scaleX(0.930);transform-origin:0 0;">0.000</div>
<div class="t" style="left:1189.0px;top:846.2px;font-size:14.53px;line-height:14.53px;color:#2b4a2b;transform:scaleX(0.930);transform-origin:0 0;">Pass</div>
<div class="b" style="left:1169.3px;top:865px;width:70.0px;height:20px;background:#88d69c;border-bottom:1px solid #c8ecd0"></div>
<div class="t" style="left:695.5px;top:866.2px;font-size:14.53px;line-height:14.53px;color:#3a3a3a;transform:scaleX(0.930);transform-origin:0 0;">3</div>
<div class="b" style="left:720px;top:862.5px;width:160px;height:22px;overflow:hidden"><div class="t" style="left:12.7px;top:3.7px;font-size:14.53px;line-height:14.53px;color:#3a3a3a;transform:scaleX(0.930);transform-origin:0 0;">Fit Circle OD Diameter</div>
</div>
<div class="t" style="left:905.3px;top:866.2px;font-size:14.53px;line-height:14.53px;color:#3a3a3a;transform:scaleX(0.930);transform-origin:0 0;">15.100</div>
<div class="t" style="left:996.0px;top:866.2px;font-size:14.53px;line-height:14.53px;color:#3a3a3a;transform:scaleX(0.930);transform-origin:0 0;">15.500</div>
<div class="t" style="left:1094.3px;top:866.2px;font-size:14.53px;line-height:14.53px;color:#3a3a3a;transform:scaleX(0.930);transform-origin:0 0;">15.392</div>
<div class="t" style="left:1189.0px;top:866.2px;font-size:14.53px;line-height:14.53px;color:#2b4a2b;transform:scaleX(0.930);transform-origin:0 0;">Pass</div>
<div class="b" style="left:1169.3px;top:885px;width:70.0px;height:20px;background:#88d69c;border-bottom:1px solid #c8ecd0"></div>
<div class="t" style="left:695.5px;top:886.2px;font-size:14.53px;line-height:14.53px;color:#3a3a3a;transform:scaleX(0.930);transform-origin:0 0;">4</div>
<div class="b" style="left:720px;top:882.5px;width:160px;height:22px;overflow:hidden"><div class="t" style="left:13.6px;top:3.7px;font-size:14.53px;line-height:14.53px;color:#3a3a3a;transform:scaleX(0.930);transform-origin:0 0;">FIT Circle ID Diameter</div>
</div>
<div class="t" style="left:909.1px;top:886.2px;font-size:14.53px;line-height:14.53px;color:#3a3a3a;transform:scaleX(0.930);transform-origin:0 0;">9.150</div>
<div class="t" style="left:999.8px;top:886.2px;font-size:14.53px;line-height:14.53px;color:#3a3a3a;transform:scaleX(0.930);transform-origin:0 0;">9.550</div>
<div class="t" style="left:1098.1px;top:886.2px;font-size:14.53px;line-height:14.53px;color:#3a3a3a;transform:scaleX(0.930);transform-origin:0 0;">9.285</div>
<div class="t" style="left:1189.0px;top:886.2px;font-size:14.53px;line-height:14.53px;color:#2b4a2b;transform:scaleX(0.930);transform-origin:0 0;">Pass</div>
<div class="b" style="left:1169.3px;top:905px;width:70.0px;height:20px;background:#88d69c;border-bottom:1px solid #c8ecd0"></div>
<div class="t" style="left:695.5px;top:906.2px;font-size:14.53px;line-height:14.53px;color:#3a3a3a;transform:scaleX(0.930);transform-origin:0 0;">5</div>
<div class="b" style="left:720px;top:902.5px;width:160px;height:22px;overflow:hidden"><div class="t" style="left:40.1px;top:3.7px;font-size:14.53px;line-height:14.53px;color:#3a3a3a;transform:scaleX(0.930);transform-origin:0 0;">Flash or Dent</div>
</div>
<div class="t" style="left:909.1px;top:906.2px;font-size:14.53px;line-height:14.53px;color:#3a3a3a;transform:scaleX(0.930);transform-origin:0 0;">0.000</div>
<div class="t" style="left:999.8px;top:906.2px;font-size:14.53px;line-height:14.53px;color:#3a3a3a;transform:scaleX(0.930);transform-origin:0 0;">0.220</div>
<div class="t" style="left:1098.1px;top:906.2px;font-size:14.53px;line-height:14.53px;color:#3a3a3a;transform:scaleX(0.930);transform-origin:0 0;">0.091</div>
<div class="t" style="left:1189.0px;top:906.2px;font-size:14.53px;line-height:14.53px;color:#2b4a2b;transform:scaleX(0.930);transform-origin:0 0;">Pass</div>
<div class="b" style="left:1310px;top:803px;width:581px;height:124px;background:#fff;border:1px solid #a9a9a9"></div>
<div class="t" style="left:1316.0px;top:806.2px;font-size:14.53px;line-height:14.53px;color:#2a2a2a;font-weight:bold;transform:scaleX(0.889);transform-origin:0 0;">S No.</div>
<div class="t" style="left:1368.7px;top:806.2px;font-size:14.53px;line-height:14.53px;color:#2a2a2a;font-weight:bold;transform:scaleX(0.927);transform-origin:0 0;">Measurement Name</div>
<div class="t" style="left:1518.0px;top:806.2px;font-size:14.53px;line-height:14.53px;color:#2a2a2a;font-weight:bold;transform:scaleX(0.938);transform-origin:0 0;">Lower Limit</div>
<div class="t" style="left:1613.0px;top:806.2px;font-size:14.53px;line-height:14.53px;color:#2a2a2a;font-weight:bold;transform:scaleX(0.917);transform-origin:0 0;">Upper Limit</div>
<div class="t" style="left:1704.4px;top:806.2px;font-size:14.53px;line-height:14.53px;color:#2a2a2a;font-weight:bold;transform:scaleX(0.937);transform-origin:0 0;">Actual Value</div>
<div class="t" style="left:1822.0px;top:806.2px;font-size:14.53px;line-height:14.53px;color:#2a2a2a;font-weight:bold;transform:scaleX(0.890);transform-origin:0 0;">Result</div>
<svg style="left:0;top:0" width="1" height="1"><path d="M1876.5 817 L1880.5 813 L1884.5 817" stroke="#555" stroke-width="1.6" fill="none"/></svg>
<svg style="left:0;top:0" width="1" height="1"><path d="M1876.5 914 L1880.5 918 L1884.5 914" stroke="#555" stroke-width="1.6" fill="none"/></svg>
<div class="b" style="left:1794.6px;top:825px;width:77.80000000000018px;height:20px;background:#88d69c;border-bottom:1px solid #c8ecd0"></div>
<div class="t" style="left:1328.7px;top:826.2px;font-size:14.53px;line-height:14.53px;color:#3a3a3a;transform:scaleX(0.930);transform-origin:0 0;">1</div>
<div class="b" style="left:1350px;top:822.5px;width:162px;height:22px;overflow:hidden"><div class="t" style="left:9.5px;top:3.7px;font-size:14.53px;line-height:14.53px;color:#3a3a3a;transform:scaleX(0.930);transform-origin:0 0;">Image Process Success</div>
</div>
<div class="t" style="left:1539.1px;top:826.2px;font-size:14.53px;line-height:14.53px;color:#3a3a3a;transform:scaleX(0.930);transform-origin:0 0;">1.000</div>
<div class="t" style="left:1633.1px;top:826.2px;font-size:14.53px;line-height:14.53px;color:#3a3a3a;transform:scaleX(0.930);transform-origin:0 0;">1.000</div>
<div class="t" style="left:1728.6px;top:826.2px;font-size:14.53px;line-height:14.53px;color:#3a3a3a;transform:scaleX(0.930);transform-origin:0 0;">1.000</div>
<div class="t" style="left:1827.0px;top:826.2px;font-size:14.53px;line-height:14.53px;color:#2b4a2b;transform:scaleX(0.930);transform-origin:0 0;">Pass</div>
<div class="b" style="left:1794.6px;top:845px;width:77.80000000000018px;height:20px;background:#ee6677"></div>
<div class="t" style="left:1328.7px;top:846.2px;font-size:14.53px;line-height:14.53px;color:#3a3a3a;transform:scaleX(0.930);transform-origin:0 0;">2</div>
<div class="b" style="left:1350px;top:842.5px;width:162px;height:22px;overflow:hidden"><div class="t" style="left:59.1px;top:3.7px;font-size:14.53px;line-height:14.53px;color:#3a3a3a;transform:scaleX(0.930);transform-origin:0 0;">Defects</div>
</div>
<div class="t" style="left:1539.1px;top:846.2px;font-size:14.53px;line-height:14.53px;color:#3a3a3a;transform:scaleX(0.930);transform-origin:0 0;">0.000</div>
<div class="t" style="left:1633.1px;top:846.2px;font-size:14.53px;line-height:14.53px;color:#3a3a3a;transform:scaleX(0.930);transform-origin:0 0;">0.000</div>
<div class="t" style="left:1728.6px;top:846.2px;font-size:14.53px;line-height:14.53px;color:#3a3a3a;transform:scaleX(0.930);transform-origin:0 0;">2.000</div>
<div class="t" style="left:1831.1px;top:846.2px;font-size:14.53px;line-height:14.53px;color:#5a1010;transform:scaleX(0.930);transform-origin:0 0;">Fail</div>
<div class="b" style="left:1794.6px;top:865px;width:77.80000000000018px;height:20px;background:#88d69c;border-bottom:1px solid #c8ecd0"></div>
<div class="t" style="left:1328.7px;top:866.2px;font-size:14.53px;line-height:14.53px;color:#3a3a3a;transform:scaleX(0.930);transform-origin:0 0;">3</div>
<div class="b" style="left:1350px;top:862.5px;width:162px;height:22px;overflow:hidden"><div class="t" style="left:41.4px;top:3.7px;font-size:14.53px;line-height:14.53px;color:#3a3a3a;transform:scaleX(0.930);transform-origin:0 0;">Flash or Dent</div>
</div>
<div class="t" style="left:1539.1px;top:866.2px;font-size:14.53px;line-height:14.53px;color:#3a3a3a;transform:scaleX(0.930);transform-origin:0 0;">0.000</div>
<div class="t" style="left:1633.1px;top:866.2px;font-size:14.53px;line-height:14.53px;color:#3a3a3a;transform:scaleX(0.930);transform-origin:0 0;">0.220</div>
<div class="t" style="left:1728.6px;top:866.2px;font-size:14.53px;line-height:14.53px;color:#3a3a3a;transform:scaleX(0.930);transform-origin:0 0;">0.069</div>
<div class="t" style="left:1827.0px;top:866.2px;font-size:14.53px;line-height:14.53px;color:#2b4a2b;transform:scaleX(0.930);transform-origin:0 0;">Pass</div>
<div class="b" style="left:58.3px;top:949.5px;width:488.40000000000003px;height:28.5px;background:#8ddb9e;border-radius:3px 0 0 3px"></div>
<div class="b" style="left:546.7px;top:949.5px;width:65.0px;height:28.5px;background:#f8687a;border-radius:0 3px 3px 0;box-shadow:inset 0 0 0 0.6px #d85a6a"></div>
<div class="t" style="left:284.4px;top:955.6px;font-size:18.17px;line-height:18.17px;color:#1d3a1d;transform:scaleX(0.950);transform-origin:0 0;">89%</div>
<div class="t" style="left:561.6px;top:955.6px;font-size:18.17px;line-height:18.17px;color:#6a0e14;transform:scaleX(0.900);transform-origin:0 0;">11%</div>
<div class="b" style="left:690px;top:949.5px;width:519px;height:28.5px;background:#8ddb9e;border-radius:3px 0 0 3px"></div>
<div class="b" style="left:1209px;top:949.5px;width:34px;height:28.5px;background:#f8687a;border-radius:0 3px 3px 0;box-shadow:inset 0 0 0 0.6px #d85a6a"></div>
<div class="t" style="left:930.7px;top:955.6px;font-size:18.17px;line-height:18.17px;color:#1d3a1d;transform:scaleX(0.950);transform-origin:0 0;">98%</div>
<div class="t" style="left:1212.2px;top:955.6px;font-size:18.17px;line-height:18.17px;color:#6a0e14;transform:scaleX(0.900);transform-origin:0 0;">2%</div>
<div class="b" style="left:1328.7px;top:950px;width:445.29999999999995px;height:27.5px;background:#8ddb9e;border-radius:3px 0 0 3px"></div>
<div class="b" style="left:1774px;top:950px;width:108.20000000000005px;height:27.5px;background:#f8687a;border-radius:0 3px 3px 0;box-shadow:inset 0 0 0 0.6px #d85a6a"></div>
<div class="t" style="left:1532.5px;top:955.6px;font-size:18.17px;line-height:18.17px;color:#1d3a1d;transform:scaleX(0.950);transform-origin:0 0;">81%</div>
<div class="t" style="left:1811.6px;top:955.6px;font-size:18.17px;line-height:18.17px;color:#6a0e14;transform:scaleX(0.900);transform-origin:0 0;">19%</div>
<div class="b" style="left:15px;top:1000px;width:118px;height:39px;background:#cfe3fb;border:1.5px solid #5a6e8e"></div>
<div class="b" style="left:25px;top:1008px;width:22px;height:22px;background:#1f78d1"></div>
<div class="t" style="left:77.0px;top:1012.5px;font-size:15.99px;line-height:15.99px;color:#1a2030;font-weight:bold;transform:scaleX(0.775);transform-origin:0 0;">Stop</div>
<div class="b" style="left:165px;top:1005px;width:1602px;height:29px;background:#f9f9f9;border:1.5px solid #bdbdbd;border-bottom-color:#cfcfcf"></div>
<div class="t" style="left:869.3px;top:1008.2px;font-size:18.17px;line-height:18.17px;color:#3a3a3a;transform:scaleX(0.926);transform-origin:0 0;">Inspection - In Progress</div>
<div class="t" style="left:1047px;top:1008px;font-size:17px;line-height:17px;color:#a0a0a0">...</div>
<div class="b" style="left:1800px;top:1000px;width:113px;height:39px;background:#efefef;border:1px solid #dcdcdc"></div>
<svg style="left:1807px;top:1004px" width="30" height="32"><path d="M1 1 L13 1 L13 29 L1 27 Z" fill="#a4c2ea"/><path d="M13 1 L20 1 Q21 1 21 2 L21 11 M21 19 L21 26 Q21 27 20 27 L13 27" stroke="#9aa6b6" stroke-width="1.6" fill="none"/><path d="M14 1 L20 1 L20 27 L14 27 Z" fill="#eaf2fc"/><path d="M18 15 L27 15 M24.5 12.5 L27 15 L24.5 17.5" stroke="#9aa6b6" stroke-width="1.4" fill="none"/></svg>
<div class="t" style="left:1854.3px;top:1011.0px;font-size:14.53px;line-height:14.53px;color:#8a8a8a;transform:scaleX(0.971);transform-origin:0 0;">Exit</div>
<svg style="left:0;top:0" width="1" height="1">
<defs><linearGradient id="apg" x1="0" y1="0" x2="1" y2="1"><stop offset="0" stop-color="#2a6ab8"/><stop offset="1" stop-color="#0f4c9a"/></linearGradient>
<linearGradient id="apgl" x1="0" y1="0" x2="0" y2="1"><stop offset="0" stop-color="#d0e4f8" stop-opacity="0.9"/><stop offset="1" stop-color="#6a9ad0" stop-opacity="0.2"/></linearGradient></defs>
<path d="M96 46 Q94.5 45.3 94.2 47 L86.8 76 Q86.5 77.6 88 78.2 L108 88 Q109.5 88.6 109.8 87 L117.3 58 Q117.6 56.5 116 55.8 Z" fill="url(#apg)"/>
<path d="M98 49 L113 56.5 L108.5 71 L94 64 Z" fill="url(#apgl)" opacity="0.7"/>
</svg>
<div class="t" style="left:91.5px;top:62.8px;font-size:9.5px;line-height:9.5px;color:#e8f0ff;font-style:italic;-webkit-text-stroke:0.4px #e8f0ff;transform:scaleX(1.35) skewX(-8deg);transform-origin:0 0;letter-spacing:0.5px">AP</div>
<div class="t" style="left:118px;top:58.5px;font-size:13.5px;line-height:13.5px;color:#22407a;font-style:italic;transform:scaleX(1.22);transform-origin:0 0;letter-spacing:0.6px;-webkit-text-stroke:0.3px #22407a">ARUL</div>
<div class="t" style="left:117px;top:69.5px;font-size:13.5px;line-height:13.5px;color:#d42a2e;font-style:italic;transform:scaleX(1.22);transform-origin:0 0;letter-spacing:2.1px;-webkit-text-stroke:0.3px #d42a2e">POLYMERS</div>
<svg style="left:0;top:0" width="1" height="1">
<g fill="#1e96e0">
<path d="M1706.4 55.4 L1717.3 55.4 L1717.3 73.7 L1720.6 73.7 L1720.6 80.8 L1714 80.8 Q1706.4 80.8 1706.4 72.5 Z"/>
<path d="M1721.3 55.2 L1727.8 55.2 L1721.3 60.4 Z"/>
<path d="M1730.8 74.8 L1730.8 80.8 L1724.8 80.8 Z"/>
<path d="M1730.8 55.4 L1735.5 55.4 Q1744.7 55.4 1744.7 65.5 L1744.7 80.8 L1735.2 80.8 L1735.2 63.8 L1730.8 63.8 Z"/>
<path d="M1749.8 80.8 L1749.8 66.5 Q1749.8 56.5 1759.6 55.4 L1759.6 70 Q1759.6 80 1749.8 80.8 Z"/>
</g>
<g fill="#ee3636">
<path d="M1764.9 55.4 L1772.2 55.4 L1772.2 74.6 L1780 74.6 L1780 80.9 L1767.5 80.9 Q1764.9 80.9 1764.9 78 Z"/>
<path fill-rule="evenodd" d="M1791.5 55.4 L1793 55.4 Q1801.7 55.4 1801.7 64.5 L1801.7 71.8 Q1801.7 80.9 1793 80.9 L1791.5 80.9 Q1782.8 80.9 1782.8 71.8 L1782.8 64.5 Q1782.8 55.4 1791.5 55.4 Z M1792.5 62.2 Q1790.3 62.2 1790.3 64.4 L1790.3 73 Q1790.3 75.2 1792.5 75.2 Q1794.7 75.2 1794.7 73 L1794.7 64.4 Q1794.7 62.2 1792.5 62.2 Z"/>
<path d="M1805.8 68.7 L1824.5 56 L1824.5 62.5 L1815.3 68.7 L1824.3 74.6 L1824.3 80.6 Z"/>
<path d="M1829.9 55.4 L1836.7 55.4 L1836.7 80.9 L1829.9 80.9 Z"/>
<path d="M1857 55.4 L1850.5 55.4 Q1841.5 55.4 1841.5 65 L1841.5 71.5 Q1841.5 80.9 1850.5 80.9 L1857 80.9 L1857 75 L1851 75 Q1848.8 75 1848.8 72.5 L1848.8 64.8 Q1848.8 62.2 1851 62.2 L1857 62.2 Z"/>
</g></svg>
<svg style="left:0;top:0" width="1" height="1"><path d="M636.5 636.5 L636.5 653 L640.3 649.3 L643 655.5 L645.3 654.5 L642.7 648.5 L648 648.3 Z" fill="#fff" stroke="#555" stroke-width="1.1" stroke-linejoin="round"/></svg>
</body></html>
